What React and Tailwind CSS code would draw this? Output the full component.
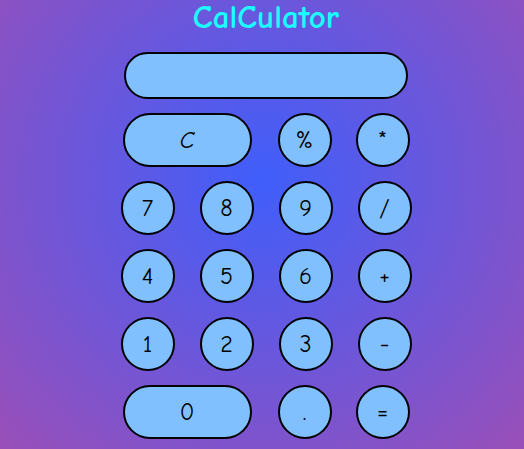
const rows = [
  ['7', '8', '9', '/'],
  ['4', '5', '6', '+'],
  ['1', '2', '3', '-'],
]

function Key({ label, wide }) {
  return (
    <button
      className={`${wide ? 'w-[129px]' : 'w-[54px]'} h-[54px] rounded-full border-2 border-black bg-[#80c0ff] text-black text-[24px] leading-none flex items-center justify-center`}
    >
      {label}
    </button>
  )
}

export default function App() {
  return (
    <div
      className="min-h-screen bg-[radial-gradient(circle_at_50%_40%,#3f5efb_0%,#9a4fb8_100%)] flex flex-col items-center pl-[8px]"
      style={{ fontFamily: '"Comic Sans MS", "Comic Neue", "DejaVu Sans", sans-serif' }}
    >
      <h1 className="leading-[34px] text-[33px] font-bold text-[#19ffff]">CalCulator</h1>

      <div className="mt-[18px] w-[284px] h-[47px] rounded-full border-2 border-black bg-[#80c0ff]" />

      <div className="mt-[14px] flex flex-col gap-[14px] items-center">
        <div className="flex">
          <Key label={<span className="italic">C</span>} wide />
          <div className="ml-[26px]"><Key label="%" /></div>
          <div className="ml-[24px]"><Key label="*" /></div>
        </div>
        {rows.map((r, i) => (
          <div key={i} className="flex gap-[25px]">
            {r.map((k) => (
              <Key key={k} label={k} />
            ))}
          </div>
        ))}
        <div className="flex">
          <Key label="0" wide />
          <div className="ml-[26px]"><Key label="." /></div>
          <div className="ml-[24px]"><Key label="=" /></div>
        </div>
      </div>
    </div>
  )
}
